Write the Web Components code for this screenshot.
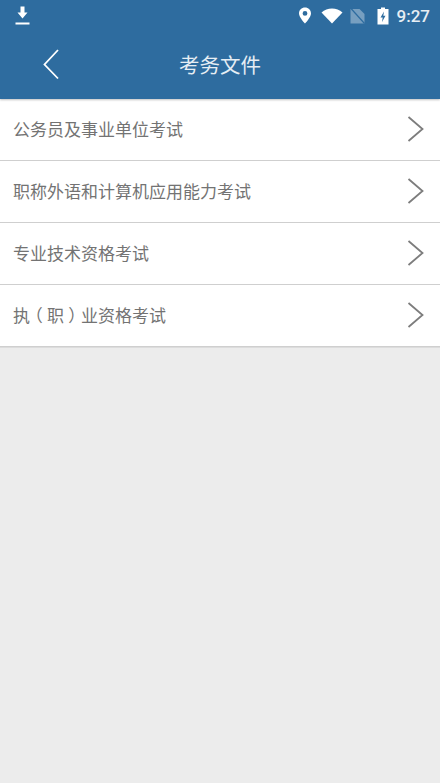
<!DOCTYPE html>
<html lang="zh">
<head>
<meta charset="utf-8">
<title>考务文件</title>
<style>
  html, body { margin: 0; height: 100%; background: #ececec; }
  body { font-family: "Roboto", "Noto Sans CJK SC", sans-serif; }
  /* Reference font centres the full-width brackets in their cell */
  .paren { font-feature-settings: "halt"; margin: 0 4.250px; }
</style>
</head>
<body>
<exam-screen>
  <status-bar slot="status" time="9:27"></status-bar>
  <title-bar slot="title">考务文件</title-bar>
  <list-row>公务员及事业单位考试</list-row>
  <list-row>职称外语和计算机应用能力考试</list-row>
  <list-row>专业技术资格考试</list-row>
  <list-row>执<span class="paren">（</span>职<span class="paren">）</span>业资格考试</list-row>
</exam-screen>
<script>
  class ExamScreen extends HTMLElement {
    constructor() {
      super();
      this.attachShadow( {mode: 'open'} ).innerHTML = `
        <style>
          :host {
            background: #ececec;
            display: flex;
            flex-direction: column;
            height: 783px;
            width: 440px;
          }
          header {
            background: #2e6c9f;
            box-shadow: 0 1px 2px rgba( 0, 0, 0, 0.25 );
            display: flex;
            flex-direction: column;
            position: relative;
          }
          main {
            box-shadow: 0 1px 0 #dcdcdc;
            display: flex;
            flex-direction: column;
          }
        </style>
        <header>
          <slot name="status"></slot>
          <slot name="title"></slot>
        </header>
        <main><slot></slot></main>
      `;
    }
  }

  class StatusBar extends HTMLElement {
    constructor() {
      super();
      this.attachShadow( {mode: 'open'} ).innerHTML = `
        <style>
          :host {
            align-items: center;
            box-sizing: border-box;
            color: #e6eef4;
            display: flex;
            font-family: "Roboto", sans-serif;
            font-size: 17px;
            font-weight: 500;
            height: 33px;
            padding: 0 10px 2px 15px;
          }
          svg { display: block; flex: none; }
          .gap { flex: 1; }
          .right { align-items: center; display: flex; }
        </style>
        <svg width="15" height="20" viewBox="0 0 15 20">
          <path d="M5.500 0.500h4v6h3l-5 6-5-6h3z" fill="#fff"/>
          <rect x="0.500" y="16.500" width="14" height="2" fill="#fff"/>
        </svg>
        <span class="gap"></span>
        <div class="right">
          <svg width="14" height="17" viewBox="0 0 13 17" style="margin-right:9px">
            <path fill-rule="evenodd" d="M6.500 0.500c3.400 0 6 2.600 6 5.900 0 3.800-6 10.100-6 10.100s-6-6.300-6-10.100c0-3.300 2.600-5.900 6-5.900zm0 3.500a2.400 2.400 0 1 0 0 4.800 2.400 2.400 0 0 0 0-4.800z" fill="#fff"/>
          </svg>
          <svg width="22" height="16" viewBox="0 0 22 16" style="margin-right:7px">
            <path d="M0.500 4.500C3.500 2 7 0.500 11 0.500s7.500 1.500 10.500 4L11 15.500z" fill="#fff"/>
          </svg>
          <svg width="15" height="16" viewBox="0 0 15 16" style="margin-right:12px">
            <path d="M0.500 1h9l5 5v9.500H0.500z" fill="#fff" fill-opacity="0.35"/>
            <path d="M1 0.500l13.500 15" stroke="#2e6c9f" stroke-width="1.200"/>
          </svg>
          <svg width="12" height="18" viewBox="0 0 12 18" style="margin-right:8px">
            <path fill-rule="evenodd" d="M4 0.500h4v1.500h3.500v15.500H0.500V2H4zM7 4.500l-3.500 6h2.200L5 15l3.500-6.200H6.300z" fill="#fff"/>
          </svg>
          <span>${this.getAttribute( 'time' )}</span>
        </div>
      `;
    }
  }

  class TitleBar extends HTMLElement {
    constructor() {
      super();
      this.attachShadow( {mode: 'open'} ).innerHTML = `
        <style>
          :host {
            align-items: center;
            color: #e6eef4;
            display: flex;
            font-family: "Noto Sans CJK SC", sans-serif;
            font-size: 20.500px;
            height: 66px;
            justify-content: center;
            position: relative;
          }
          svg {
            left: 41px;
            position: absolute;
            top: 15px;
          }
          p { margin: 0 0 4px 0; }
        </style>
        <svg width="19" height="32" viewBox="0 0 19 32">
          <path d="M17 2L3.500 16.500 17 30.500" fill="none" stroke="#ffffff" stroke-width="1.800"/>
        </svg>
        <p><slot></slot></p>
      `;
    }
  }

  class ListRow extends HTMLElement {
    constructor() {
      super();
      this.attachShadow( {mode: 'open'} ).innerHTML = `
        <style>
          :host {
            align-items: center;
            background: #ffffff;
            border-bottom: 1px solid #cfcfcf;
            box-sizing: border-box;
            color: #737373;
            display: flex;
            font-family: "Noto Sans CJK SC", sans-serif;
            font-size: 17px;
            height: 62px;
            justify-content: space-between;
            padding: 0 15px 0 13px;
          }
          span { margin-bottom: 2px; }
          svg { display: block; flex: none; margin-bottom: 1px; }
        </style>
        <span><slot></slot></span>
        <svg width="18" height="26" viewBox="0 0 18 26">
          <path d="M1.500 1L15.500 13 1.500 25" fill="none" stroke="#7d7d7d" stroke-width="1.800"/>
        </svg>
      `;
    }
  }

  window.customElements.define( 'exam-screen', ExamScreen );
  window.customElements.define( 'status-bar', StatusBar );
  window.customElements.define( 'title-bar', TitleBar );
  window.customElements.define( 'list-row', ListRow );
</script>
</body>
</html>
